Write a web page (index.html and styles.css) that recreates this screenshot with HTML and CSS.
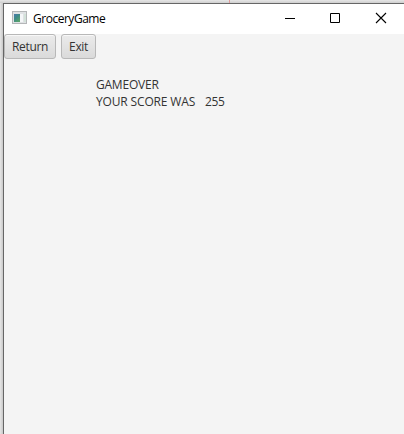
FILE: index.html
```
<!DOCTYPE html>
<html lang="en">
<head>
<meta charset="utf-8">
<title>GroceryGame</title>
<link rel="stylesheet" href="styles.css">
</head>
<body>
<div class="desktop">
  <main class="window">
    <header class="titlebar">
      <svg class="app-icon" width="15" height="13" viewBox="0 0 15 13" shape-rendering="crispEdges">
        <defs>
          <linearGradient id="scene" x1="0" y1="0" x2="0.7" y2="1">
            <stop offset="0" stop-color="#4a78b0"/>
            <stop offset="0.5" stop-color="#3f8c86"/>
            <stop offset="1" stop-color="#5aa36c"/>
          </linearGradient>
        </defs>
        <rect width="15" height="13" fill="#b4b6b8"/>
        <rect x="1" y="1" width="13" height="11" fill="#dfe2e4"/>
        <rect x="2" y="3" width="6" height="8" fill="url(#scene)"/>
        <rect x="8" y="3" width="3" height="8" fill="#f4f6f8"/>
        <rect x="12" y="3" width="2" height="8" fill="#d3e2da"/>
      </svg>
      <h1 class="title">GroceryGame</h1>
      <div class="controls">
        <svg width="46" height="30" viewBox="0 0 46 30"><path d="M19 14.5h10" stroke="#000"/></svg>
        <svg width="46" height="30" viewBox="0 0 46 30"><path d="M18.5 9.5h9v9h-9z" fill="none" stroke="#000"/></svg>
        <svg width="46" height="30" viewBox="0 0 46 30"><path d="M18 9l10 10M28 9l-10 10" stroke="#000" stroke-width="1.1"/></svg>
      </div>
    </header>
    <nav class="toolbar">
      <button class="button return"><span>Return</span></button>
      <button class="button exit"><span>Exit</span></button>
    </nav>
    <section class="result">
      <p class="gameover">GAMEOVER</p>
      <p class="score"><span class="label">YOUR SCORE WAS</span><span class="value">255</span></p>
    </section>
  </main>
</div>
</body>
</html>
```
FILE: styles.css
```
* { box-sizing: border-box; }

body {
  margin: 0;
  overflow: hidden;
  font: 12px/17px "Open Sans", "Noto Sans", sans-serif;
  color: #333;
}

.desktop {
  height: 434px;
  padding: 3px 0 0 3px;
  background:
    linear-gradient(#e09a9a, #e09a9a) 229px 0 / 1px 3px no-repeat,
    linear-gradient(#e6e6e6, #cfcfcf) 0 0 / 100% 3px no-repeat,
    linear-gradient(90deg, #e6e6e6, #c8c8c8) 0 0 / 3px 100% no-repeat;
}

.window {
  height: 431px;
  border: solid #666;
  border-width: 1px 0 0 1px;
  background: #f4f4f4;
}

.titlebar {
  display: flex;
  align-items: flex-start;
  height: 30px;
  background: #fff;
}

.app-icon { margin: 7px 0 0 8px; }

.title {
  margin: 6px 0 0 6px;
  font-size: 12px;
  font-weight: 400;
  letter-spacing: -0.48px;
  color: #000;
}

.controls {
  display: flex;
  margin-left: auto;
}

.toolbar {
  display: flex;
  gap: 5px;
}

.button {
  height: 25px;
  padding: 0;
  border: 1px solid #b8b8b8;
  border-radius: 3px;
  background: linear-gradient(#ebebeb, #dadada);
  box-shadow: inset 0 1px #f8f8f8;
  font: inherit;
  letter-spacing: -0.35px;
  color: #333;
  white-space: nowrap;
}

.return { width: 52px; }
.exit { width: 35px; }

.result { padding: 17px 0 0 92px; }

.result p { margin: 0; }

.gameover { letter-spacing: -0.22px; }

.score { display: flex; }

.label {
  width: 109px;
  letter-spacing: -0.15px;
}

.value { letter-spacing: -0.3px; }
```
